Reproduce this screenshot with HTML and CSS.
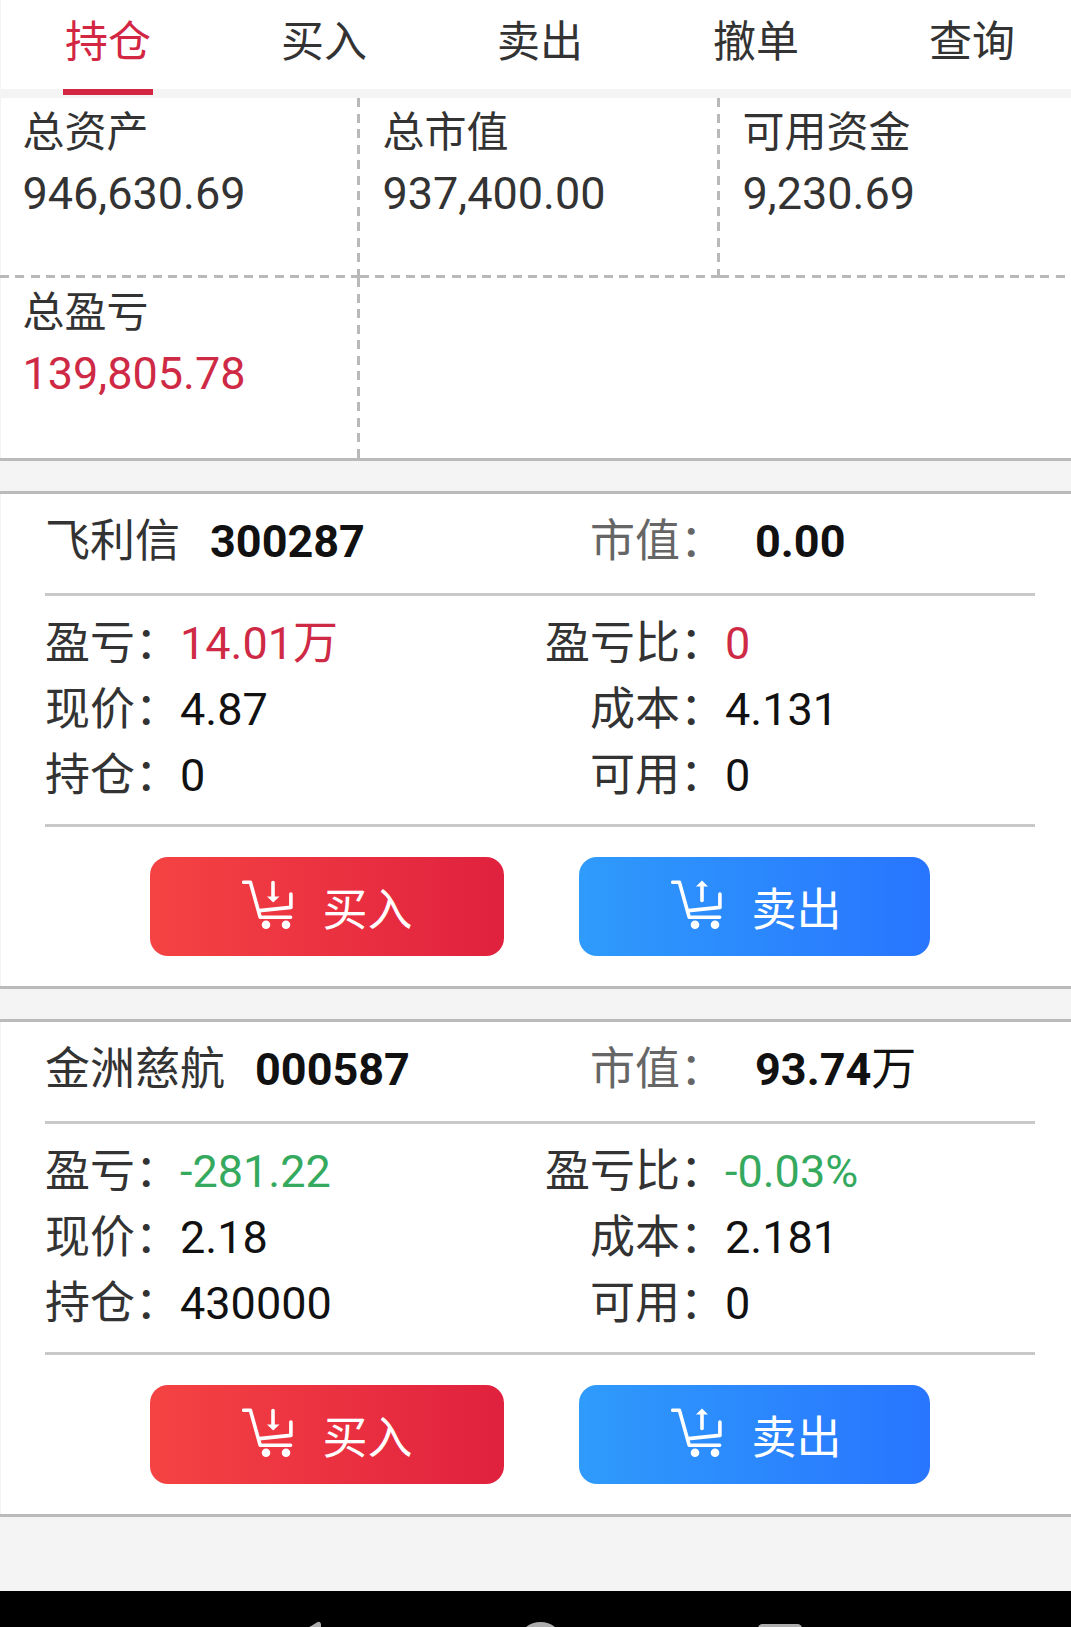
FILE: index.html
```html
<!DOCTYPE html>
<html lang="zh-CN">
<head>
    <meta charset="UTF-8">
    <title>持仓</title>
    <link rel="stylesheet" href="styles.css">
</head>
<body>
    <!-- Cart icons shared by the trade buttons -->
    <svg class="sprite" width="0" height="0">
        <symbol id="cart" viewBox="0 0 51 50">
            <path d="M1.6 2.2H8.4L18.2 37.2H48.6M17.6 30.6L48.9 27.4V14" fill="none" stroke="#fff" stroke-width="3.6" stroke-linecap="round" stroke-linejoin="round"/>
            <circle cx="24" cy="44.8" r="4.3" fill="#fff"/>
            <circle cx="44" cy="44.8" r="4.3" fill="#fff"/>
        </symbol>
        <symbol id="cart-in" viewBox="0 0 51 50">
            <use href="#cart"/>
            <path d="M31 2.5V17" stroke="#fff" stroke-width="3.6" stroke-linecap="round"/>
            <path d="M25 16.5H37.5L31.2 22.5Z" fill="#fff"/>
        </symbol>
        <symbol id="cart-out" viewBox="0 0 51 50">
            <use href="#cart"/>
            <path d="M31 6V20.5" stroke="#fff" stroke-width="3.6" stroke-linecap="round"/>
            <path d="M25 6.5H37L31 .6Z" fill="#fff"/>
        </symbol>
    </svg>

    <div class="page">
        <nav class="tabs">
            <a class="tab active">持仓</a>
            <a class="tab">买入</a>
            <a class="tab">卖出</a>
            <a class="tab">撤单</a>
            <a class="tab">查询</a>
        </nav>

        <div class="summary">
            <div class="cell line-right line-bottom">
                <div class="cell-label">总资产</div>
                <div class="cell-value">946,630.69</div>
            </div>
            <div class="cell line-right line-bottom">
                <div class="cell-label">总市值</div>
                <div class="cell-value">937,400.00</div>
            </div>
            <div class="cell line-bottom">
                <div class="cell-label">可用资金</div>
                <div class="cell-value">9,230.69</div>
            </div>
            <div class="cell line-right">
                <div class="cell-label">总盈亏</div>
                <div class="cell-value red">139,805.78</div>
            </div>
        </div>

        <div class="stock">
            <div class="stock-head">
                <div class="stock-name">飞利信<b>300287</b></div>
                <div class="stock-worth"><span class="label">市值：</span><b>0.00</b></div>
            </div>
            <div class="stock-body">
                <div class="item">盈亏：<span class="red">14.01万</span></div>
                <div class="item"><span class="label">盈亏比：</span><span class="red">0</span></div>
                <div class="item">现价：<span class="num">4.87</span></div>
                <div class="item"><span class="label">成本：</span><span class="num">4.131</span></div>
                <div class="item">持仓：<span class="num">0</span></div>
                <div class="item"><span class="label">可用：</span><span class="num">0</span></div>
            </div>
            <div class="actions">
                <a class="btn buy"><svg class="icon"><use href="#cart-in"/></svg>买入</a>
                <a class="btn sell"><svg class="icon"><use href="#cart-out"/></svg>卖出</a>
            </div>
        </div>

        <div class="stock">
            <div class="stock-head">
                <div class="stock-name">金洲慈航<b>000587</b></div>
                <div class="stock-worth"><span class="label">市值：</span><b>93.74<i>万</i></b></div>
            </div>
            <div class="stock-body">
                <div class="item">盈亏：<span class="green">-281.22</span></div>
                <div class="item"><span class="label">盈亏比：</span><span class="green">-0.03%</span></div>
                <div class="item">现价：<span class="num">2.18</span></div>
                <div class="item"><span class="label">成本：</span><span class="num">2.181</span></div>
                <div class="item">持仓：<span class="num">430000</span></div>
                <div class="item"><span class="label">可用：</span><span class="num">0</span></div>
            </div>
            <div class="actions">
                <a class="btn buy"><svg class="icon"><use href="#cart-in"/></svg>买入</a>
                <a class="btn sell"><svg class="icon"><use href="#cart-out"/></svg>卖出</a>
            </div>
        </div>

        <!-- System navigation bar -->
        <div class="navbar">
            <svg width="1080" height="36" fill="none" stroke="#acacac" stroke-width="5" stroke-linejoin="round">
                <path d="M318.5 33.5V75L284 54Z"/>
                <circle cx="540.5" cy="54.5" r="21"/>
                <rect x="760.5" y="35.5" width="39" height="39" rx="2"/>
            </svg>
        </div>
    </div>
</body>
</html>
```
FILE: styles.css
```css
* {
    box-sizing: border-box;
    margin: 0;
    padding: 0;
}

body {
    height: 1627px;
    overflow: hidden;
    background-color: #f4f4f4;
    color: #333;
    font-family: Roboto, 'Noto Sans CJK SC', sans-serif;
    font-size: 45px;
}

svg {
    display: block;
}

.page {
    display: flex;
    flex-direction: column;
    width: 1080px;
    height: 1627px;
    overflow: hidden;
}

.red {
    color: #cf2a45;
}

.green {
    color: #35a95e;
}

/* Tabs */
.tabs {
    display: flex;
    height: 98px;
    border-bottom: 9px solid #f4f4f4;
    background-color: #fff;
    box-shadow: inset 1px 0 #f4f4f4;
}

.tab {
    position: relative;
    flex: 1;
    text-align: center;
    font-size: 43px;
    line-height: 85px;
}

.tab.active {
    color: #d22643;
}

.tab.active::after {
    content: '';
    position: absolute;
    left: 63px;
    top: 89px;
    width: 90px;
    height: 6px;
    background-color: #d22643;
}

/* Account summary */
.summary {
    display: grid;
    grid-template-columns: repeat(3, 360px);
    grid-auto-rows: 180px;
    border-bottom: 3px solid #bababa;
    background-color: #fff;
    box-shadow: inset 1px 0 #f4f4f4;
}

.cell {
    --dash-x: linear-gradient(transparent, transparent);
    --dash-y: linear-gradient(transparent, transparent);
    padding: 5px 0 0 22.5px;
    background-image: var(--dash-x), var(--dash-y);
    background-position: left bottom, right top;
    background-size: 100% 3px, 3px 100%;
    background-repeat: no-repeat;
}

.line-right {
    --dash-y: repeating-linear-gradient(to bottom, #b9b9b9 0 9px, transparent 9px 15.545px);
}

.line-bottom {
    --dash-x: repeating-linear-gradient(to right, #b9b9b9 0 9px, transparent 9px 15.26px);
}

.cell-label {
    font-size: 42px;
    line-height: 60px;
}

.cell-value {
    line-height: 62px;
}

/* Stock cards */
.stock {
    height: 498px;
    margin-top: 30px;
    padding: 0 45px;
    border-top: 3px solid #bababa;
    border-bottom: 3px solid #bababa;
    background-color: #fff;
    box-shadow: inset 1px 0 #f4f4f4;
}

.stock-head {
    display: flex;
    height: 102px;
    border-bottom: 3px solid #c9c9c9;
    line-height: 96px;
}

.stock-name {
    width: 500px;
}

.stock-head b {
    margin-left: 30px;
    color: #111;
}

.stock-head i {
    font-style: normal;
    font-weight: 400;
}

.stock-worth {
    color: #666;
}

.label {
    display: inline-block;
    width: 180px;
    text-align: right;
}

.stock-body {
    display: grid;
    grid-template-columns: 500px 1fr;
    grid-auto-rows: 66px;
    padding: 15px 0;
    border-bottom: 3px solid #c9c9c9;
    line-height: 66px;
}

.num {
    color: #111;
}

.actions {
    display: flex;
    gap: 75px;
    padding: 30px 0 0 105px;
}

.btn {
    display: flex;
    gap: 29.5px;
    height: 99px;
    padding-left: 92px;
    border-radius: 18px;
    color: #fff;
    line-height: 108px;
}

.buy {
    width: 354px;
    background-image: linear-gradient(to right, #f54343, #e0213e);
}

.sell {
    width: 351px;
    background-image: linear-gradient(to right, #2f9bfb, #2875ff);
}

.icon {
    width: 51px;
    height: 50px;
    margin-top: 23px;
}

.navbar {
    height: 36px;
    margin-top: auto;
    background-color: #000;
}
```
